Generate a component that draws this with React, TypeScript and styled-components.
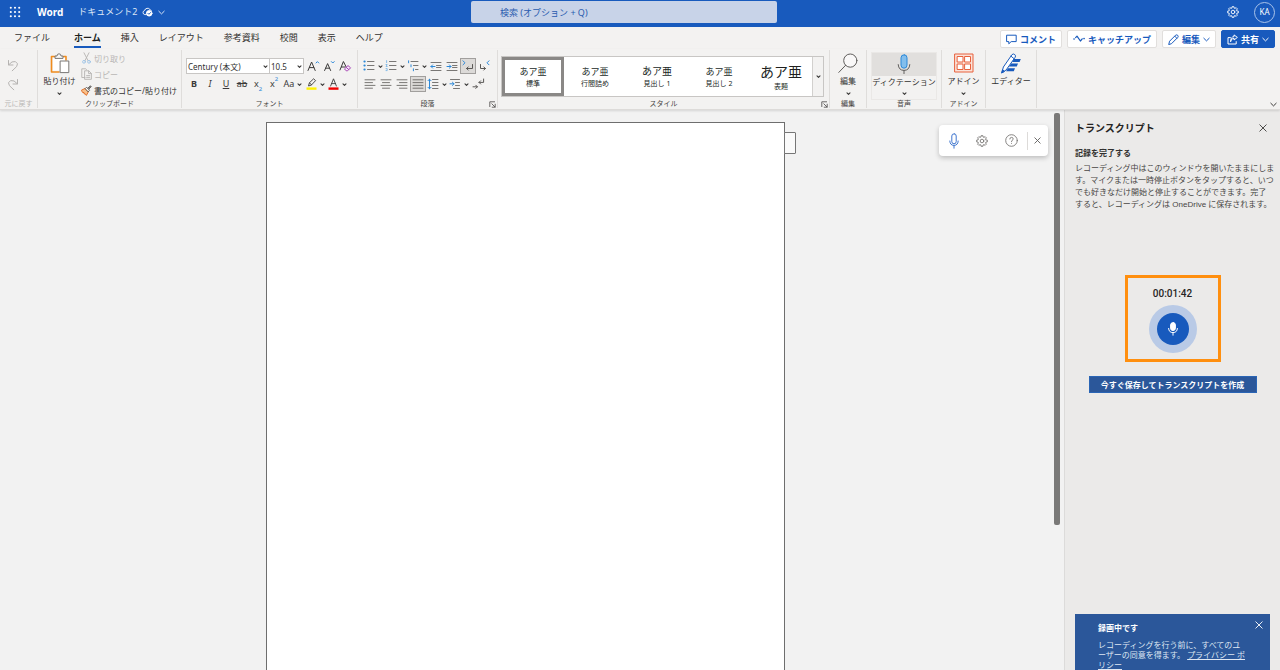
import React from "react";
import styled, { createGlobalStyle, css } from "styled-components";

const BLUE = "#185abd";
const INK = "#3b3a39";
const SKY = "#2b88d8";

const GlobalStyle = createGlobalStyle`
  *, *::before, *::after { box-sizing: border-box; }
  html, body { margin: 0; padding: 0; }
  body, button, input, select {
    font-family: "Noto Sans", "Noto Sans CJK JP", sans-serif;
  }
  button { margin: 0; padding: 0; border: 0; background: none; color: inherit; cursor: pointer; }
  svg { display: block; flex: none; }
  h1, h2, h3, p { margin: 0; }
`;

/* ---------- icons ---------- */

type IconProps = {
  w: number;
  h: number;
  color?: string;
  stroke?: number;
  children: React.ReactNode;
};

const Icon = ({ w, h, color = INK, stroke = 1, children }: IconProps) => (
  <svg
    width={w}
    height={h}
    viewBox={`0 0 ${w} ${h}`}
    fill="none"
    stroke={color}
    strokeWidth={stroke}
    strokeLinecap="round"
    strokeLinejoin="round"
    aria-hidden="true"
  >
    {children}
  </svg>
);

const Chevron = ({ color = INK, size = 7 }: { color?: string; size?: number }) => (
  <Icon w={size} h={size} color={color}>
    <path d={`M.8 ${size * 0.32} L${size / 2} ${size * 0.7} L${size - 0.8} ${size * 0.32}`} />
  </Icon>
);

const Caret = () => (
  <Icon w={5} h={5} stroke={1.1}>
    <path d="M1 1.8 L2.5 3.3 L4 1.8" />
  </Icon>
);

const Close = ({ color, size = 8 }: { color: string; size?: number }) => (
  <Icon w={size} h={size} color={color} stroke={0.9}>
    <path d={`M.8 .8 L${size - 0.8} ${size - 0.8} M${size - 0.8} .8 L.8 ${size - 0.8}`} />
  </Icon>
);

const Waffle = () => (
  <Icon w={12} h={12} color="none">
    {[1.8, 6, 10.2].map((y) =>
      [1.8, 6, 10.2].map((x) => <circle key={`${x}-${y}`} cx={x} cy={y} r="1.05" fill="#fff" />)
    )}
  </Icon>
);

const CloudSaved = () => (
  <Icon w={11} h={10} color="#fff" stroke={0.9}>
    <path d="M4 7.6 H2.8 A2.1 2.1 0 0 1 2.6 3.5 A3 3 0 0 1 8 2.6 Q8.8 2.8 9.2 3.4" />
    <circle cx="7.2" cy="6.3" r="2.8" fill="#fff" />
    <path d="M5.9 6.3 L6.9 7.3 L8.6 5.5" stroke={BLUE} />
  </Icon>
);

const gearPath = (() => {
  const pts: string[] = [];
  for (let i = 0; i < 8; i++) {
    const a = (i * Math.PI) / 4;
    [[-0.27, 4.1], [-0.17, 5.4], [0.17, 5.4], [0.27, 4.1]].forEach(([d, r]) => {
      pts.push(`${(6 + r * Math.cos(a + d)).toFixed(2)} ${(6 + r * Math.sin(a + d)).toFixed(2)}`);
    });
  }
  return `M${pts.join(" L")} Z`;
})();

const Gear = ({ color }: { color: string }) => (
  <Icon w={12} h={12} color={color} stroke={0.9}>
    <path d={gearPath} />
    <circle cx="6" cy="6" r="1.8" />
  </Icon>
);

const Undo = ({ flip }: { flip?: boolean }) => (
  <Icon w={12} h={13} color="#b5b3b1">
    <g transform={flip ? "matrix(-1 0 0 1 12 0)" : undefined}>
      <path d="M1.5 1.5 V6 H6" />
      <path d="M1.8 5.6 Q5 1.6 8.4 2.6 Q12 4.4 9.6 7.6 L5.2 11.8" />
    </g>
  </Icon>
);

const Paste = () => (
  <Icon w={20} h={21} color="#797775">
    <path d="M6 3.5 H1.5 V19 H9 M13.5 3.5 H16 V7" stroke="#f08c1e" strokeWidth="1.6" />
    <path d="M3 5 H15 V8 H10 V17.5 H3 Z" fill="#fff" stroke="none" />
    <path d="M5 5 V3 H7 Q7 .8 9 .8 Q11 .8 11 3 H13 V5 Z" fill="#f7f6f5" />
    <path d="M10.5 8 H18.8 V19.6 H10.5 Z" fill="#fff" />
  </Icon>
);

const Cut = () => (
  <Icon w={11} h={12} color="#b5b3b1" stroke={0.9}>
    <path d="M3 .8 L7 8.6 M8 .8 L4 8.6" />
    <circle cx="3" cy="9.8" r="1.4" stroke="#9cc3e6" />
    <circle cx="8" cy="9.8" r="1.4" stroke="#9cc3e6" />
  </Icon>
);

const Copy = () => (
  <Icon w={11} h={12} color="#b5b3b1" stroke={0.9}>
    <path d="M4 9.5 H.8 V.8 H4.8 L5.5 1.5" />
    <path d="M4 2.8 H7.8 L10.4 5.4 V11.3 H4 Z M7.6 3 V5.6 H10.2 M5.6 7.6 H8.8 M5.6 9.4 H8.8" />
  </Icon>
);

const Brush = () => (
  <Icon w={11} h={11} color="#5a5856" stroke={0.9}>
    <path d="M.8 5 L4.2 3.4 L7.4 6.8 L5.4 10.4 Q4.4 9.8 4.2 8.8 L3.2 9 L3 7.6 L1.8 7.4 Z" fill="#f9c08a" stroke="#e0661c" />
    <path d="M4.4 3.4 L5.6 2.2 L8.6 5.2 L7.4 6.6 Z" fill="#fff" />
    <path d="M6.8 3.2 L9.4 .8 L10.2 1.6 L7.8 4.2" fill="#8a8886" />
  </Icon>
);

const SizeA = ({ up }: { up?: boolean }) => (
  <Icon w={13} h={12}>
    {up ? <path d="M1 10.5 L4.6 2 L8.2 10.5 M2.4 7.6 H6.8" /> : <path d="M1.6 10.5 L4.6 3.6 L7.6 10.5 M2.6 8.2 H6.6" />}
    <path d={up ? "M9 3 L10.4 1.6 L11.8 3" : "M8.4 1.6 L9.8 3 L11.2 1.6"} stroke={SKY} />
  </Icon>
);

const ClearFormat = () => (
  <Icon w={13} h={12}>
    <path d="M1 10 L4.4 1.5 L7.2 7 M2.4 7 H6" />
    <path d="M5.8 8.6 L9 5.6 L11.6 7.8 L8.6 10.8 H7.6 Z M7.2 7.4 L9.8 9.6" stroke="#a646b4" fill="#f7e8fa" />
  </Icon>
);

const Highlighter = () => (
  <Icon w={11} h={12} stroke={0.9}>
    <path d="M2.6 7.6 L3.4 4.8 L7.6 .8 L9.6 2.6 L5.6 6.8 Z M3.4 4.8 L5.6 6.8" />
    <path d="M.5 10.6 H10.5" stroke="#fff100" strokeWidth="2.4" strokeLinecap="butt" />
  </Icon>
);

const FontColor = () => (
  <Icon w={11} h={12} stroke={0.9}>
    <path d="M2.6 8 L5.5 .8 L8.4 8 M3.6 5.6 H7.4" />
    <path d="M.5 10.6 H10.5" stroke="#f00000" strokeWidth="2.4" strokeLinecap="butt" />
  </Icon>
);

const ListIcon = ({ kind }: { kind: "bullet" | "number" | "multi" }) => (
  <Icon w={12} h={12} color="#797775">
    {kind === "multi" ? (
      <>
        <path d="M4 1.5 H11 M6.5 5.5 H11 M8.5 9.5 H11" />
        <path d="M1.6 .8 V2.8 M4 4.8 V6.8 M6.4 8.8 V10.8" stroke={SKY} />
      </>
    ) : (
      <>
        <path d="M4.5 1.5 H11 M4.5 5.5 H11 M4.5 9.5 H11" />
        {kind === "bullet" ? (
          <path d="M1.5 1.5 H1.6 M1.5 5.5 H1.6 M1.5 9.5 H1.6" stroke={SKY} strokeWidth="2.2" />
        ) : (
          <path d="M1.6 .6 V2.6 M1 4.5 H2.2 L1 6.5 H2.2 M1 8.6 H2.2 V10.6 H1" stroke="#6fb0e6" strokeWidth="0.8" />
        )}
      </>
    )}
  </Icon>
);

const IndentIcon = ({ out }: { out?: boolean }) => (
  <Icon w={12} h={11} color="#797775">
    <path d="M1 1.5 H11 M6.5 4.5 H11 M6.5 6.5 H11 M1 9.5 H11" />
    <path d={out ? "M5 5.5 H1 M2.6 3.9 L1 5.5 L2.6 7.1" : "M1 5.5 H5 M3.4 3.9 L5 5.5 L3.4 7.1"} stroke={SKY} />
  </Icon>
);

const Direction = ({ rtl }: { rtl?: boolean }) => (
  <Icon w={12} h={12}>
    <path d={rtl ? "M11 .8 L9 2.8 L11 4.8" : "M1 .8 L3 2.8 L1 4.8"} stroke={SKY} />
    <path
      d={rtl ? "M2.5 4.5 V8.5 H7.4 M5.8 6.9 L7.4 8.5 L5.8 10.1" : "M10.5 4.5 V8.5 H4.6 M6.2 6.9 L4.6 8.5 L6.2 10.1"}
      stroke="#5a5856"
    />
  </Icon>
);

type Align = "left" | "center" | "right" | "full";

const alignRows: Record<Align, [number, number][]> = {
  left: [[1, 11], [1, 8.5], [1, 11], [1, 8.5]],
  center: [[1, 11], [2.5, 9.5], [1, 11], [2.5, 9.5]],
  right: [[1, 11], [3.5, 11], [1, 11], [3.5, 11]],
  full: [[1, 11], [1, 11], [1, 11], [1, 11]],
};

const AlignIcon = ({ kind }: { kind: Align }) => (
  <Icon w={12} h={10} color="#6b6967" stroke={0.9}>
    <path d={alignRows[kind].map(([x1, x2], i) => `M${x1} ${0.8 + i * 2.8} H${x2}`).join(" ")} />
  </Icon>
);

const LineSpacing = () => (
  <Icon w={12} h={12} color="#797775">
    <path d="M5.5 1.5 H11 M5.5 4.5 H11 M5.5 7.5 H11 M5.5 10.5 H11" />
    <path d="M2.5 1.2 V10.8 M1 2.7 L2.5 1.2 L4 2.7 M1 9.3 L2.5 10.8 L4 9.3" stroke={SKY} />
  </Icon>
);

const ParaSpacing = () => (
  <Icon w={12} h={12} color="#797775">
    <path d="M1.5 1.5 H10.5 M6.5 4.5 H10.5 M6.5 7.5 H10.5 M4.5 10.5 H10.5" />
    <path d="M1 5.8 H5 M3.4 4.2 L5 5.8 L3.4 7.4" stroke={SKY} />
  </Icon>
);

const Marks = () => (
  <Icon w={13} h={12} color="#5a5856">
    <path d="M1 8.8 H5.4 M3.8 7.2 L5.4 8.8 L3.8 10.4 M11.6 1 V4.4 H7 M8.6 2.8 L7 4.4 L8.6 6" />
  </Icon>
);

const Launcher = () => (
  <Icon w={7} h={7} color="#5a5856" stroke={0.9}>
    <path d="M.8 5.6 V.8 H5.6 M2.8 2.8 L6 6 M6.2 3.2 V6.2 H3.2" />
  </Icon>
);

const Magnifier = () => (
  <Icon w={20} h={21} color="#605e5c">
    <circle cx="12.3" cy="7.6" r="6.6" fill="#f9f8f8" />
    <path d="M7.6 12.3 L.8 19.4" />
  </Icon>
);

const DictateMic = () => (
  <Icon w={14} h={21} color="#605e5c">
    <rect x="4" y=".8" width="6" height="13.4" rx="3" fill="#83beec" stroke={SKY} />
    <path d="M1.2 10.6 Q1.6 16.4 7 16.4 Q12.4 16.4 12.8 10.6 M7 16.6 V19.6" />
  </Icon>
);

const AddIns = () => (
  <Icon w={20} h={21} color="#e8613c">
    <rect x="1" y="1" width="18" height="18" fill="#fbe3da" />
    <rect x="3.5" y="3.5" width="5.5" height="5.5" fill="#fff" />
    <rect x="11" y="3.5" width="5.5" height="5.5" fill="#fff" />
    <rect x="3.5" y="11" width="5.5" height="5.5" fill="#fff" />
    <rect x="11" y="11" width="5.5" height="5.5" fill="#fff" />
  </Icon>
);

const EditorIcon = () => (
  <Icon w={20} h={21} color={BLUE}>
    <path
      d="M13 6 H19.8 L18.6 9 H11 Z M10 10.6 H17 L15.8 13.6 H8 Z M7 15.2 H14 L12.8 18.2 H5 Z"
      fill={BLUE}
      stroke="none"
    />
    <path d="M.8 19.6 L2.4 14 L11 1.6 Q12.4 .4 13.8 1.6 Q15 2.8 14.2 4.2 L5.4 16.6 Z" fill="#fff" />
    <path d="M10 3.2 L13 5.6" />
    <path d="M.8 19.6 L1.6 16.8 L3.2 18.2 Z" fill={BLUE} />
  </Icon>
);

const CommentIcon = () => (
  <Icon w={11} h={11} color={BLUE}>
    <path d="M1 1.2 H10.2 V7.6 H5.2 L2.8 9.8 V7.6 H1 Z" />
  </Icon>
);

const CatchUpIcon = () => (
  <Icon w={12} h={10} color={BLUE} stroke={1.2}>
    <path d="M2.6 3.6 L4 2.2 L7.4 7 L9.2 4.8" />
    <path d="M1 5 H1.1 M11 4.6 H11.1" strokeWidth="1.6" />
  </Icon>
);

const PencilIcon = () => (
  <Icon w={11} h={11} color={BLUE}>
    <path d="M.8 10.2 L1.6 7.2 L7.6 1.2 Q8.8 .4 9.8 1.4 Q10.6 2.4 9.8 3.4 L3.8 9.4 Z M6.8 2.2 L8.8 4.2" />
  </Icon>
);

const ShareIcon = () => (
  <Icon w={11} h={11} color="#fff">
    <path d="M3.4 3.6 H1 V10 H9.2 V7.6 M3.6 7.4 Q4 4.4 7 4.2 V6 L10.4 3.4 L7 .9 V2.6 Q3.4 3 3.6 7.4" />
  </Icon>
);

const PaneMic = () => (
  <Icon w={10} h={16} color="#3f76cf">
    <rect x="2.8" y=".8" width="4.4" height="10" rx="2.2" />
    <path d="M.8 8 Q1 12.4 5 12.4 Q9 12.4 9.2 8 M5 12.6 V15.2" />
  </Icon>
);

const Help = () => (
  <Icon w={13} h={13} color="#797775" stroke={0.9}>
    <circle cx="6.5" cy="6.5" r="5.8" />
    <path d="M4.8 5 Q4.8 3.4 6.5 3.4 Q8.2 3.4 8.2 4.9 Q8.2 5.8 7.2 6.3 Q6.5 6.8 6.5 7.6 M6.5 9.3 V9.4" />
  </Icon>
);

const RecordMic = () => (
  <Icon w={12} h={14} color="#fff">
    <rect x="3.6" y=".6" width="4.8" height="8" rx="2.4" fill="#fff" />
    <path d="M1.6 6.4 Q1.8 10.6 6 10.6 Q10.2 10.6 10.4 6.4 M6 10.8 V13.2" />
  </Icon>
);

/* ---------- shell ---------- */

const Shell = styled.div`
  display: flex;
  flex-direction: column;
  height: 100vh;
  overflow: hidden;
  background: #f3f2f1;
  color: #323130;
  font-size: 8px;
`;

const TitleBar = styled.header`
  display: grid;
  grid-template-columns: 471fr 306px 503fr;
  align-items: center;
  flex: none;
  height: 27px;
  padding-bottom: 3px;
  background: ${BLUE};
  color: #fff;
`;

const TitleStart = styled.div`
  display: flex;
  align-items: center;
  padding-left: 9px;
`;

const AppName = styled.h1`
  margin: 0 15px 0 16px;
  font-size: 10px;
  line-height: 14px;
  font-weight: 700;
`;

const FileButton = styled.button`
  display: flex;
  align-items: center;
  gap: 5px;
  font-size: 9px;
  line-height: 14px;
  color: #dce6f6;
`;

const Search = styled.input`
  height: 22px;
  width: 100%;
  padding: 0 29px;
  border: 0;
  border-radius: 2px;
  background: #c8d3e8;
  font-size: 9px;
  color: #2a5caf;
  &::placeholder { color: #2a5caf; opacity: 1; }
`;

const TitleEnd = styled.div`
  display: flex;
  align-items: center;
  justify-content: flex-end;
  gap: 15px;
  padding-right: 5px;
`;

const Avatar = styled.button`
  width: 21px;
  height: 21px;
  border: 1px solid #a9c3ea;
  border-radius: 50%;
  font-size: 8px;
  line-height: 18px;
`;

const TabBar = styled.div`
  display: flex;
  align-items: center;
  justify-content: space-between;
  flex: none;
  height: 22px;
  padding: 2px 5px 0 4px;
`;

const Tabs = styled.nav`
  display: flex;
`;

const Tab = styled.button<{ $active?: boolean; $file?: boolean }>`
  display: flex;
  padding: 0 ${(p) => (p.$file ? 14 : 10)}px 0 10px;
  font-size: 9px;
  line-height: 16px;
  white-space: nowrap;
  span {
    border-bottom: 2px solid ${(p) => (p.$active ? BLUE : "transparent")};
    ${(p) => p.$active && css`font-weight: 700; color: #201f1e;`}
  }
`;

const Actions = styled.div`
  display: flex;
  gap: 5px;
`;

const ActionButton = styled.button<{ $primary?: boolean }>`
  display: flex;
  align-items: center;
  gap: 3px;
  height: 18px;
  padding: 0 5px;
  border: 1px solid ${(p) => (p.$primary ? BLUE : "#e1dfdd")};
  border-radius: 2px;
  background: ${(p) => (p.$primary ? BLUE : "#fff")};
  color: ${(p) => (p.$primary ? "#fff" : BLUE)};
  font-size: 9px;
  font-weight: 700;
  white-space: nowrap;
`;

/* ---------- ribbon ---------- */

const Ribbon = styled.div`
  display: flex;
  flex: none;
  height: 61px;
  padding: 1px 3px 1px 0;
  border-bottom: 1px solid #dddbd9;
  box-shadow: 0 1px 2px rgba(0, 0, 0, 0.12);
  z-index: 1;
`;

const GroupBox = styled.section<{ $w: number }>`
  position: relative;
  display: flex;
  flex-direction: column;
  flex: none;
  width: ${(p) => p.$w}px;
  border-right: 1px solid #dfdddb;
`;

const GroupBody = styled.div`
  display: flex;
  flex: 1;
  min-height: 0;
`;

const GroupLabel = styled.h2<{ $muted?: boolean }>`
  font-size: 7px;
  line-height: 8px;
  font-weight: 400;
  text-align: center;
  white-space: nowrap;
  color: ${(p) => (p.$muted ? "#b9b7b5" : "#484644")};
`;

const LauncherButton = styled.button`
  position: absolute;
  right: 1px;
  bottom: 0;
`;

type GroupProps = { w: number; label?: string; muted?: boolean; launcher?: boolean; children: React.ReactNode };

const Group = ({ w, label, muted, launcher, children }: GroupProps) => (
  <GroupBox $w={w}>
    <GroupBody>{children}</GroupBody>
    {label && <GroupLabel $muted={muted}>{label}</GroupLabel>}
    {launcher && (
      <LauncherButton aria-label={`${label}の設定`}>
        <Launcher />
      </LauncherButton>
    )}
  </GroupBox>
);

const UndoColumn = styled.div`
  display: flex;
  flex-direction: column;
  gap: 6px;
  padding: 9px 0 0 7px;
`;

const BigButton = styled.button`
  display: flex;
  flex-direction: column;
  align-items: center;
  flex: 1;
  padding-top: 3px;
  font-size: 8px;
  line-height: 14px;
  white-space: nowrap;
  svg + span { margin-bottom: 3px; }
`;

const SmallColumn = styled.div`
  display: flex;
  flex-direction: column;
  flex: none;
  width: 100px;
`;

const SmallButton = styled.button`
  display: flex;
  align-items: center;
  gap: 2px;
  height: 16px;
  font-size: 8px;
  white-space: nowrap;
  color: #323130;
  &:disabled { color: #b9b7b5; }
`;

const Rows = styled.div`
  display: flex;
  flex-direction: column;
  gap: 2px;
  padding: 8px 0 0 4px;
`;

const Row = styled.div`
  display: flex;
  height: 16px;
`;

const SelectBox = styled.label<{ $w: number }>`
  display: flex;
  align-items: center;
  width: ${(p) => p.$w}px;
  padding-right: 1px;
  border: 1px solid #c8c6c4;
  background: #fff;
  & + & { border-left: 0; margin-right: 1px; }
  select {
    flex: 1;
    min-width: 0;
    height: 14px;
    padding: 0 1px;
    border: 0;
    background: none;
    appearance: none;
    font-size: 8px;
    color: #323130;
  }
`;

const Tool = styled.button<{ $drop?: boolean; $on?: boolean }>`
  display: flex;
  align-items: center;
  justify-content: center;
  gap: ${(p) => (p.$drop ? 3 : 0)}px;
  width: ${(p) => (p.$drop ? 22 : 16)}px;
  height: 16px;
  font-size: 9px;
  line-height: 14px;
  color: ${INK};
  white-space: nowrap;
  ${(p) => p.$on && css`border: 1px solid #a19f9d; background: #dcdad8;`}
  sub, sup { font-size: 6px; line-height: 6px; color: ${SKY}; }
  sub { align-self: flex-end; }
  sup { align-self: flex-start; }
`;

const Gallery = styled.div`
  display: flex;
  width: 323px;
  height: 41px;
  margin: 6px 0 0 3px;
  border: 1px solid #c8c6c4;
  background: #fff;
`;

const StyleItem = styled.button<{ $size: number; $on?: boolean }>`
  display: flex;
  flex-direction: column;
  align-items: center;
  justify-content: center;
  width: 62px;
  border: 3px solid ${(p) => (p.$on ? "#8a8886" : "transparent")};
  color: #201f1e;
  font-size: ${(p) => p.$size}px;
  line-height: ${(p) => Math.round(p.$size * 1.5)}px;
  white-space: nowrap;
  small { font-size: 7px; line-height: 10px; }
`;

const GalleryMore = styled.button`
  display: flex;
  align-items: center;
  justify-content: center;
  flex: 1;
  border-left: 1px solid #d2d0ce;
  background: #f3f2f1;
`;

const DictateButton = styled.button`
  display: flex;
  flex-direction: column;
  align-items: center;
  flex: 1;
  margin: 2px 4px 0;
  border: 1px solid #eae8e6;
  font-size: 8px;
  line-height: 12px;
  white-space: nowrap;
  span + svg { margin-top: 3px; }
`;

const DictateFace = styled.span`
  display: flex;
  justify-content: center;
  align-self: stretch;
  padding: 1px 0;
  background: #e1dfdd;
`;

const Collapse = styled.button`
  align-self: flex-end;
  margin-left: auto;
`;

/* ---------- work area ---------- */

const Work = styled.div`
  display: flex;
  flex: 1;
  min-height: 0;
`;

const Canvas = styled.main`
  position: relative;
  display: flex;
  justify-content: center;
  flex: 1;
  padding-top: 12px;
  background: #f2f2f2;
`;

const Paper = styled.article`
  position: relative;
  width: 519px;
  border: 1px solid #6e6e6e;
  border-bottom: 0;
  background: #fff;
`;

const PaperTag = styled.button`
  position: absolute;
  top: 9px;
  left: 100%;
  width: 12px;
  height: 22px;
  border: 1px solid #767676;
  border-radius: 0 1px 1px 0;
  background: #fafafa;
`;

const FloatBar = styled.div`
  position: absolute;
  top: 15px;
  right: 3px;
  display: flex;
  align-items: center;
  justify-content: space-between;
  width: 109px;
  height: 31px;
  padding: 0 7px 0 10px;
  border-radius: 4px;
  background: #fff;
  box-shadow: 0 2px 5px rgba(0, 0, 0, 0.22);
`;

const FloatTools = styled.div`
  display: flex;
  align-items: center;
  justify-content: space-between;
  width: 79px;
  height: 18px;
  padding-right: 9px;
  border-right: 1px solid #dddbd9;
`;

const ScrollTrack = styled.div`
  flex: none;
  width: 13px;
  padding: 3px 4px 0 3px;
  background: #f2f2f2;
`;

const ScrollThumb = styled.div`
  height: 74%;
  border-radius: 2px;
  background: #7a7978;
`;

const Pane = styled.aside`
  display: flex;
  flex-direction: column;
  flex: none;
  width: 216px;
  padding: 10px 10px 0;
  border-left: 1px solid #dcdbda;
  background: #ebeae9;
`;

const PaneHead = styled.div`
  display: flex;
  align-items: center;
  justify-content: space-between;
  padding-right: 3px;
  h2 { font-size: 10px; line-height: 16px; font-weight: 700; color: #252423; }
`;

const PaneIntro = styled.div`
  margin-top: 12px;
  font-family: "Liberation Sans", "Noto Sans CJK JP", sans-serif;
  h3 { font-size: 8px; line-height: 12px; font-weight: 700; margin-bottom: 3px; }
  p { font-size: 8px; line-height: 12px; white-space: nowrap; color: #484644; }
`;

const Recorder = styled.div`
  display: flex;
  flex-direction: column;
  align-items: center;
  align-self: center;
  width: 96px;
  height: 87px;
  margin-top: 64px;
  padding-top: 9px;
  border: 3px solid #ff8f0f;
  time {
    font-family: Roboto, "Liberation Sans", sans-serif;
    font-size: 10px;
    line-height: 14px;
    font-weight: 500;
    color: #252423;
  }
`;

const RecordButton = styled.button`
  display: flex;
  align-items: center;
  justify-content: center;
  width: 32px;
  height: 32px;
  margin-top: 12px;
  border-radius: 50%;
  background: ${BLUE};
  box-shadow: 0 0 0 8px #b9cae6;
`;

const SaveButton = styled.button`
  align-self: center;
  width: 168px;
  height: 17px;
  margin-top: 14px;
  border: 1px solid #2a65b5;
  background: #2b579a;
  color: #fff;
  font-size: 8px;
  line-height: 14px;
  font-weight: 700;
  white-space: nowrap;
`;

const Toast = styled.div`
  display: flex;
  align-items: flex-start;
  justify-content: space-between;
  margin-top: auto;
  padding: 7px 7px 0 23px;
  background: #2b579a;
  color: #fff;
  h3 { margin-bottom: 6px; font-size: 8px; line-height: 13px; font-weight: 700; }
  p { font-size: 8px; line-height: 10px; white-space: nowrap; color: #dfe7f3; }
  a { color: inherit; text-decoration: underline; }
`;

export default function App() {
  return (
    <Shell>
      <GlobalStyle />
      <TitleBar>
        <TitleStart>
          <button aria-label="アプリ起動ツール"><Waffle /></button>
          <AppName>Word</AppName>
          <FileButton>
            ドキュメント2
            <CloudSaved />
            <Chevron color="#dce6f6" />
          </FileButton>
        </TitleStart>
        <Search type="search" aria-label="検索" placeholder="検索 (オプション + Q)" />
        <TitleEnd>
          <button aria-label="設定"><Gear color="#fff" /></button>
          <Avatar aria-label="アカウント">KA</Avatar>
        </TitleEnd>
      </TitleBar>

      <TabBar>
        <Tabs>
          <Tab $file><span>ファイル</span></Tab>
          <Tab $active><span>ホーム</span></Tab>
          {["挿入", "レイアウト", "参考資料", "校閲", "表示", "ヘルプ"].map((t) => (
            <Tab key={t}><span>{t}</span></Tab>
          ))}
        </Tabs>
        <Actions>
          <ActionButton><CommentIcon />コメント</ActionButton>
          <ActionButton><CatchUpIcon />キャッチアップ</ActionButton>
          <ActionButton><PencilIcon />編集<Chevron color={BLUE} /></ActionButton>
          <ActionButton $primary><ShareIcon />共有<Chevron color="#fff" /></ActionButton>
        </Actions>
      </TabBar>

      <Ribbon>
        <Group w={38} label="元に戻す" muted>
          <UndoColumn>
            <button aria-label="元に戻す"><Undo /></button>
            <button aria-label="やり直し"><Undo flip /></button>
          </UndoColumn>
        </Group>

        <Group w={144} label="クリップボード">
          <BigButton><Paste /><span>貼り付け</span><Caret /></BigButton>
          <SmallColumn>
            <SmallButton disabled><Cut />切り取り</SmallButton>
            <SmallButton disabled><Copy />コピー</SmallButton>
            <SmallButton><Brush />書式のコピー/貼り付け</SmallButton>
          </SmallColumn>
        </Group>

        <Group w={176} label="フォント">
          <Rows>
            <Row>
              <SelectBox $w={84}>
                <select aria-label="フォント名"><option>Century (本文)</option></select>
                <Caret />
              </SelectBox>
              <SelectBox $w={34}>
                <select aria-label="フォント サイズ"><option>10.5</option></select>
                <Caret />
              </SelectBox>
              <Tool aria-label="フォント サイズの拡大"><SizeA up /></Tool>
              <Tool aria-label="フォント サイズの縮小"><SizeA /></Tool>
              <Tool aria-label="書式のクリア"><ClearFormat /></Tool>
            </Row>
            <Row>
              <Tool><b>B</b></Tool>
              <Tool><i>I</i></Tool>
              <Tool><u>U</u></Tool>
              <Tool><s>ab</s></Tool>
              <Tool>x<sub>2</sub></Tool>
              <Tool>x<sup>2</sup></Tool>
              <Tool $drop>Aa<Caret /></Tool>
              <Tool $drop aria-label="蛍光ペンの色"><Highlighter /><Caret /></Tool>
              <Tool $drop aria-label="フォントの色"><FontColor /><Caret /></Tool>
            </Row>
          </Rows>
        </Group>

        <Group w={140} label="段落" launcher>
          <Rows>
            <Row>
              <Tool $drop aria-label="箇条書き"><ListIcon kind="bullet" /><Caret /></Tool>
              <Tool $drop aria-label="段落番号"><ListIcon kind="number" /><Caret /></Tool>
              <Tool $drop aria-label="アウトライン"><ListIcon kind="multi" /><Caret /></Tool>
              <Tool aria-label="インデントを減らす"><IndentIcon out /></Tool>
              <Tool aria-label="インデントを増やす"><IndentIcon /></Tool>
              <Tool $on aria-label="左から右"><Direction /></Tool>
              <Tool aria-label="右から左"><Direction rtl /></Tool>
            </Row>
            <Row>
              <Tool aria-label="左揃え"><AlignIcon kind="left" /></Tool>
              <Tool aria-label="中央揃え"><AlignIcon kind="center" /></Tool>
              <Tool aria-label="右揃え"><AlignIcon kind="right" /></Tool>
              <Tool $on aria-label="両端揃え"><AlignIcon kind="full" /></Tool>
              <Tool $drop aria-label="行間"><LineSpacing /><Caret /></Tool>
              <Tool $drop aria-label="段落の間隔"><ParaSpacing /><Caret /></Tool>
              <Tool aria-label="編集記号"><Marks /></Tool>
            </Row>
          </Rows>
        </Group>

        <Group w={332} label="スタイル" launcher>
          <Gallery>
            <StyleItem $size={9} $on>あア亜<small>標準</small></StyleItem>
            <StyleItem $size={9}>あア亜<small>行間詰め</small></StyleItem>
            <StyleItem $size={10}>あア亜<small>見出し 1</small></StyleItem>
            <StyleItem $size={9}>あア亜<small>見出し 2</small></StyleItem>
            <StyleItem $size={14}>あア亜<small>表題</small></StyleItem>
            <GalleryMore aria-label="その他のスタイル"><Caret /></GalleryMore>
          </Gallery>
        </Group>

        <Group w={37} label="編集">
          <BigButton><Magnifier /><span>編集</span><Caret /></BigButton>
        </Group>

        <Group w={75} label="音声">
          <DictateButton>
            <DictateFace><DictateMic /></DictateFace>
            <span>ディクテーション</span>
            <Caret />
          </DictateButton>
        </Group>

        <Group w={44} label="アドイン">
          <BigButton><AddIns /><span>アドイン</span><Caret /></BigButton>
        </Group>

        <Group w={51}>
          <BigButton><EditorIcon /><span>エディター</span></BigButton>
        </Group>

        <Collapse aria-label="リボンを折りたたむ"><Chevron /></Collapse>
      </Ribbon>

      <Work>
        <Canvas>
          <Paper>
            <PaperTag aria-label="ヘッダー" />
          </Paper>
          <FloatBar>
            <FloatTools>
              <button aria-label="マイク"><PaneMic /></button>
              <button aria-label="設定"><Gear color="#797775" /></button>
              <button aria-label="ヘルプ"><Help /></button>
            </FloatTools>
            <button aria-label="閉じる"><Close color="#605e5c" size={7} /></button>
          </FloatBar>
        </Canvas>
        <ScrollTrack><ScrollThumb /></ScrollTrack>

        <Pane>
          <PaneHead>
            <h2>トランスクリプト</h2>
            <button aria-label="閉じる"><Close color={INK} /></button>
          </PaneHead>
          <PaneIntro>
            <h3>記録を完了する</h3>
            <p>
              レコーディング中はこのウィンドウを開いたままにしま<br />
              す。マイクまたは一時停止ボタンをタップすると、いつ<br />
              でも好きなだけ開始と停止することができます。完了<br />
              すると、レコーディングは OneDrive に保存されます。
            </p>
          </PaneIntro>
          <Recorder>
            <time>00:01:42</time>
            <RecordButton aria-label="録音を一時停止"><RecordMic /></RecordButton>
          </Recorder>
          <SaveButton>今すぐ保存してトランスクリプトを作成</SaveButton>
          <Toast>
            <div>
              <h3>録画中です</h3>
              <p>
                レコーディングを行う前に、すべてのユ<br />
                ーザーの同意を得ます。 <a href="#privacy">プライバシー ポ<br />リシー</a>
              </p>
            </div>
            <button aria-label="閉じる"><Close color="#fff" /></button>
          </Toast>
        </Pane>
      </Work>
    </Shell>
  );
}
